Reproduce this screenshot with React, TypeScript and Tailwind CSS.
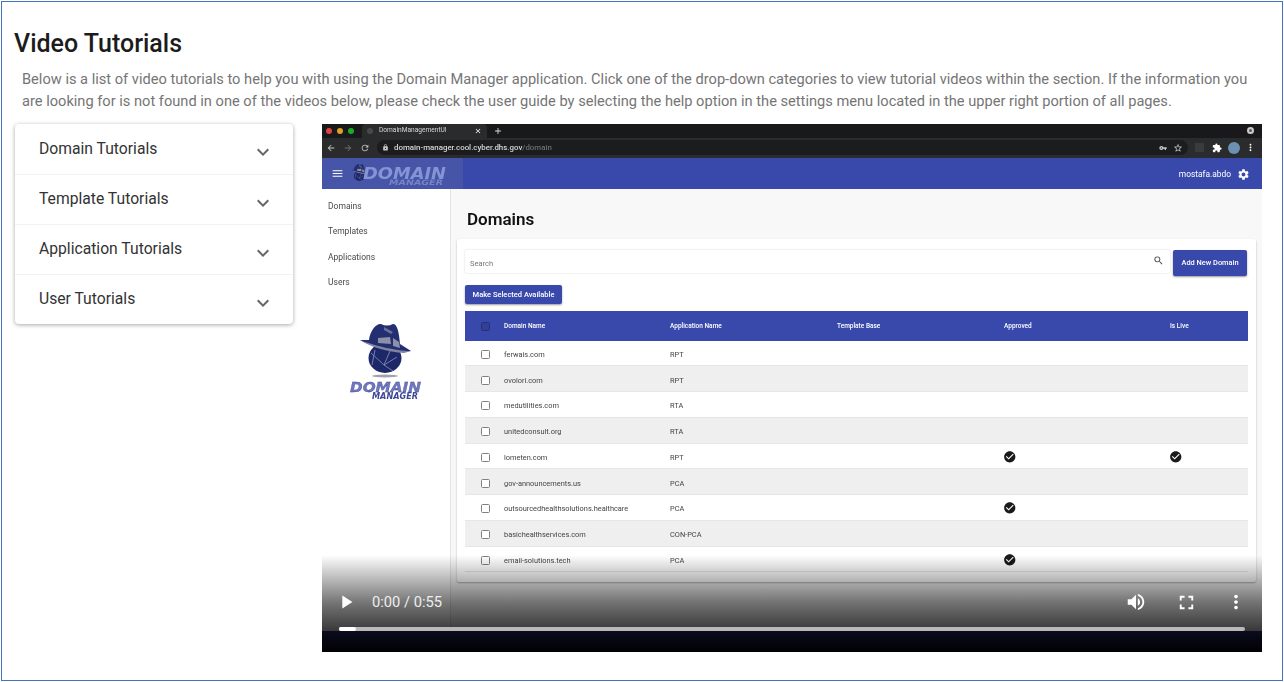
import { MdArrowBack, MdArrowForward, MdCheckCircle, MdClose, MdExpandMore, MdExtension, MdFullscreen, MdLock, MdMenu, MdMoreVert, MdPlayArrow, MdRefresh, MdSearch, MdSettings, MdStarBorder, MdVolumeUp, MdVpnKey, MdAdd } from "react-icons/md";

const categories = ["Domain Tutorials", "Template Tutorials", "Application Tutorials", "User Tutorials"];

const rows = [
  { name: "ferwais.com", app: "RPT" },
  { name: "ovolori.com", app: "RPT" },
  { name: "medutilities.com", app: "RTA" },
  { name: "unitedconsult.org", app: "RTA" },
  { name: "lometen.com", app: "RPT", approved: true, live: true },
  { name: "gov-announcements.us", app: "PCA" },
  { name: "outsourcedhealthsolutions.healthcare", app: "PCA", approved: true },
  { name: "basichealthservices.com", app: "CON-PCA" },
  { name: "email-solutions.tech", app: "PCA", approved: true },
];

const logoFont = "'DejaVu Sans', sans-serif";

const Hat = () => (
  <>
    <ellipse cx="25" cy="35" rx="16.5" ry="15" fill="#1d2868" />
    <path d="M9 17 C10 7 17 0 21 1 C25 3 29 3 33 1 C37 1 39 8 40 21 L51 28 C36 30 12 24 0 17 Z" fill="#232f70" />
    <path d="M18 15 L30 14 L31 21 L18 20 Z" fill="#8d90a8" />
    <path d="M33 15 L39 19 L40 25 L33 23 Z" fill="#8d90a8" />
    <path d="M24 4 L33 9 L31 11 L24 7 Z" fill="#6c7096" />
    <path d="M0 17 C12 22 36 28 51 28 L44 30 C28 29 10 24 0 17 Z" fill="#7f83a0" />
    <path d="M11 30 L24 42 L37 34 M15 27 L12 42 M24 42 L33 48 M30 28 L24 42" stroke="#9aa0cc" strokeWidth="0.7" fill="none" />
  </>
);

const SideLogo = () => (
  <svg width="74" height="77" viewBox="0 0 74 77">
    <g transform="translate(11 0)">
      <Hat />
      <ellipse cx="25" cy="53" rx="13" ry="1.5" fill="#a2a2ae" />
    </g>
    <text x="1" y="69" fontFamily={logoFont} fontSize="14" fontWeight="700" fontStyle="italic" fill="#6f78bd" stroke="#3c4796" strokeWidth="0.3" textLength="71" lengthAdjust="spacingAndGlyphs">DOMAIN</text>
    <text x="23" y="75.5" fontFamily={logoFont} fontSize="8" fontWeight="700" fontStyle="italic" fill="#3c4796" textLength="46" lengthAdjust="spacingAndGlyphs">MANAGER</text>
  </svg>
);

const BarLogo = () => (
  <svg width="96" height="31" viewBox="0 0 96 31" className="shrink-0">
    <g transform="translate(0 6) scale(0.34)">
      <Hat />
    </g>
    <text x="12" y="21" fontFamily={logoFont} fontSize="16" fontWeight="700" fontStyle="italic" fill="#8594d4" textLength="83" lengthAdjust="spacingAndGlyphs">DOMAIN</text>
    <text x="38" y="27" fontFamily={logoFont} fontSize="7.5" fontWeight="700" fontStyle="italic" fill="#7684c6" textLength="54" lengthAdjust="spacingAndGlyphs">MANAGER</text>
  </svg>
);

const Check = () => <MdCheckCircle className="-ml-px -mt-[2px] text-[13.5px] text-[#1a1a1a]" />;

const Box = ({ dark }: { dark?: boolean }) => (
  <span className={`block h-[9px] w-[9px] rounded-[1.5px] ${dark ? "border border-[#28307a] bg-[#343f96]" : "border-[1.5px] border-[#808080] bg-white"}`} />
);

const VideoFrame = () => (
  <div className="flex h-[528px] flex-col blur-[0.45px]">
    <div className="flex h-[14px] items-center bg-[#19191b] pl-[4px] pr-[8px]">
      <span className="h-[6px] w-[6px] rounded-full bg-[#e0443e]" />
      <span className="ml-[5px] h-[6px] w-[6px] rounded-full bg-[#dea123]" />
      <span className="ml-[5px] h-[6px] w-[6px] rounded-full bg-[#1aab29]" />
      <div className="ml-[8px] flex h-[14px] w-[125px] items-center rounded-t-[4px] bg-[#2a2b2d] pl-[5px] pr-[5px]">
        <span className="h-[6px] w-[6px] rounded-full bg-[#47494c]" />
        <span className="ml-[6px] flex-1 text-[6.6px] text-[#d8d8d8]">DomainManagementUI</span>
        <MdClose className="text-[8px] text-white" />
      </div>
      <MdAdd className="ml-[6px] text-[10px] text-[#ddd]" />
      <span className="ml-auto h-[7px] w-[7px] rounded-full border-2 border-[#ccc] bg-[#555]" />
    </div>
    <div className="flex h-[20px] items-center bg-[#2a2b2d] pl-[4px] text-[#c8c8c8]">
      <MdArrowBack className="text-[10px]" />
      <MdArrowForward className="ml-[7px] text-[10px] text-[#6c6c6c]" />
      <MdRefresh className="ml-[7px] text-[10px]" />
      <div className="ml-[7px] flex h-[15px] w-[811px] items-center rounded-full bg-[#1b1c1e] pl-[4.5px] pr-[5px]">
        <MdLock className="text-[7px]" />
        <span className="ml-[5.5px] flex-1 text-[7.9px] font-medium text-[#d6d6d6]">
          domain-manager.cool.cyber.dhs.gov<span className="text-[#6d6d6d]">/domain</span>
        </span>
        <MdVpnKey className="text-[8px]" />
        <MdStarBorder className="ml-[6px] text-[10px]" />
      </div>
      <span className="ml-[7px] h-[9px] w-[9px] bg-[#3a3b3d]" />
      <MdExtension className="ml-[8px] text-[10px] text-white" />
      <span className="ml-[6px] h-[12px] w-[12px] rounded-full bg-[#6d8fb3]" />
      <MdMoreVert className="ml-[5px] text-[11px] text-white" />
    </div>
    <div className="flex h-[31px] items-center bg-[#3949ab] pr-[12px]">
      <div className="flex h-full w-[141px] items-center bg-[#4655a8] pl-[9px]">
        <MdMenu className="text-[13px] text-white" />
        <span className="ml-[7px]"><BarLogo /></span>
      </div>
      <span className="ml-auto mt-[2px] text-[8.4px] text-white">mostafa.abdo</span>
      <MdSettings className="ml-[6px] mt-[2px] text-[13px] text-white" />
    </div>
    <div className="flex flex-1">
      <div className="flex w-[129px] shrink-0 flex-col items-start border-r border-[#e4e4e4] bg-white">
        <div className="flex flex-col gap-[12.6px] pl-[6px] pt-[11px] text-[8.5px] leading-[13px] text-[#4a4a4a]">
          <span>Domains</span>
          <span>Templates</span>
          <span>Applications</span>
          <span>Users</span>
        </div>
        <div className="ml-[27px] mt-[34px]">
          <SideLogo />
        </div>
      </div>
      <div className="flex-1 bg-[#f8f8f8] pl-[6px] pr-[6px]">
        <h2 className="pl-[10px] pt-[19px] text-[17px] font-semibold leading-[22px] text-[#111]">Domains</h2>
        <div className="mt-[9px] h-[343px] w-[799px] rounded-[2px] bg-white px-[8px] pt-[11px] shadow-[0_1px_2px_rgba(0,0,0,0.3)]">
          <div className="flex items-start">
            <div className="flex h-[23px] w-[705px] items-center justify-between rounded-[2px] bg-white pl-[5px] pr-[6px] pt-[5px] text-[7.5px] text-[#777] shadow-[0_0_2px_rgba(0,0,0,0.2)]">
              <span>Search</span>
              <MdSearch className="-mt-[7px] text-[11px] text-[#444]" />
            </div>
            <div className="ml-[3px] flex h-[26px] w-[74px] items-center justify-center rounded-[2px] bg-[#3949ab] pt-[1px] text-[7.4px] font-medium text-white shadow-[0_1px_2px_rgba(0,0,0,0.4)]">
              Add New Domain
            </div>
          </div>
          <div className="mt-[9px] flex h-[19px] w-[97px] items-center justify-center rounded-[2px] bg-[#3949ab] pt-[1px] text-[7.5px] font-medium text-white shadow-[0_1px_2px_rgba(0,0,0,0.4)]">
            Make Selected Available
          </div>
          <div className="mt-[7px] w-[783px]">
            <div className="grid h-[30px] grid-cols-[39px_166px_167px_167px_166px_78px] items-center bg-[#3949ab] pt-[2px] text-[6.5px] font-medium text-white">
              <span className="pl-[16px]"><Box dark /></span>
              <span>Domain Name</span>
              <span>Application Name</span>
              <span>Template Base</span>
              <span>Approved</span>
              <span>Is Live</span>
            </div>
            {rows.map((row, i) => (
              <div
                key={row.name}
                className={`grid h-[25.75px] grid-cols-[39px_166px_167px_167px_166px_78px] items-center border-b border-[#e6e6e6] pt-[3px] text-[7.4px] text-[#444] ${i % 2 ? "bg-[#efefef]" : "bg-white"}`}
              >
                <span className="pl-[16px]"><Box /></span>
                <span className="whitespace-nowrap">{row.name}</span>
                <span>{row.app}</span>
                <span />
                <span>{row.approved && <Check />}</span>
                <span>{row.live && <Check />}</span>
              </div>
            ))}
          </div>
        </div>
      </div>
    </div>
  </div>
);

const VideoControls = () => (
  <div className="absolute inset-x-0 bottom-0 h-[97px] bg-gradient-to-b from-black/0 via-black/55 via-50% to-black/95">
    <div className="absolute inset-x-0 bottom-0 h-[21px] bg-gradient-to-b from-[#0a0c1e] to-[#020204]" />
    <div className="flex h-[76px] items-start pl-[13px] pr-[15px] pt-[36px] text-white">
      <MdPlayArrow className="text-[22px]" />
      <span className="ml-[15px] text-[14.7px] leading-[22px] text-[#eee]">0:00 / 0:55</span>
      <MdVolumeUp className="ml-auto text-[22px]" />
      <MdFullscreen className="ml-[27.5px] text-[23px]" />
      <MdMoreVert className="ml-[27.5px] text-[22px]" />
    </div>
    <div className="absolute bottom-[21px] left-[17px] h-[4px] w-[906px] rounded-full bg-[#b9b9b9]">
      <div className="h-full w-[17px] rounded-full bg-white" />
    </div>
  </div>
);

export default function App() {
  return (
    <div className="ml-px mt-px h-[680px] w-[1282px] border border-[#4472c4] bg-white font-['Roboto',sans-serif]">
      <div className="pl-[12px] pt-[26px]">
        <h1 className="text-[25px] font-medium leading-[32px] text-[#1c1c1c]">Video Tutorials</h1>
        <p className="ml-[8px] mt-[9px] w-[1240px] text-[14.63px] leading-[21.5px] text-[#757575]">
          Below is a list of video tutorials to help you with using the Domain Manager application. Click one of the drop-down categories to view tutorial videos within the section. If the information you are looking for is not found in one of the videos below, please check the user guide by selecting the help option in the settings menu located in the upper right portion of all pages.
        </p>
      </div>
      <div className="mt-[11.5px] flex items-start pl-[13px]">
        <div className="w-[278px] rounded-[4px] bg-white shadow-[0_1px_4px_rgba(0,0,0,0.35)]">
          {categories.map((c, i) => (
            <div
              key={c}
              className={`flex h-[50px] items-center justify-between pl-[24px] pr-[18px] text-[15.7px] text-[#333] ${i ? "border-t border-[#f2f2f2]" : ""}`}
            >
              <span>{c}</span>
              <MdExpandMore className="mt-[7px] text-[24px] text-[#666]" />
            </div>
          ))}
        </div>
        <div className="relative ml-[29px] h-[528px] w-[940px] overflow-hidden bg-white">
          <VideoFrame />
          <VideoControls />
        </div>
      </div>
    </div>
  );
}
